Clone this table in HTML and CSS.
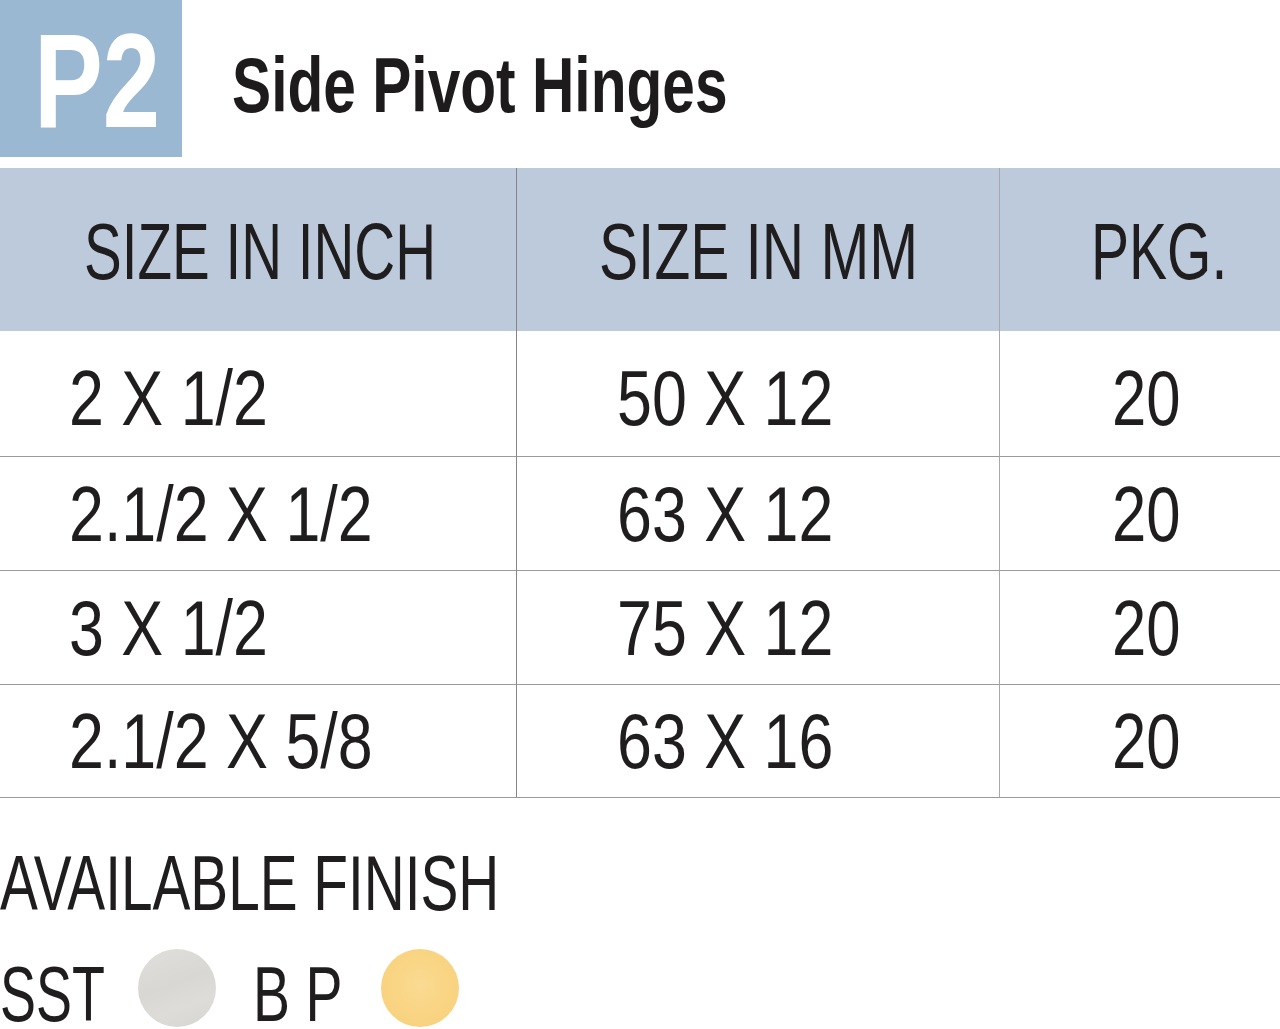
FILE: index.html
```html
<!DOCTYPE html>
<html>
<head>
<meta charset="utf-8">
<link rel="stylesheet" href="styles.css">
</head>
<body>
<div class="page">
  <header class="head">
    <div class="badge"><span class="t">P2</span></div>
    <h1 class="title"><span class="t">Side Pivot Hinges</span></h1>
  </header>
  <div class="table">
    <div class="cell th c1"><span class="t">SIZE IN INCH</span></div>
    <div class="cell th c2"><span class="t">SIZE IN MM</span></div>
    <div class="cell th c3"><span class="t">PKG.</span></div>

    <div class="cell td c1 first"><span class="t">2 X 1/2</span></div>
    <div class="cell td c2 first"><span class="t">50 X 12</span></div>
    <div class="cell td c3 first"><span class="t">20</span></div>

    <div class="cell td c1"><span class="t">2.1/2 X 1/2</span></div>
    <div class="cell td c2"><span class="t">63 X 12</span></div>
    <div class="cell td c3"><span class="t">20</span></div>

    <div class="cell td c1"><span class="t">3 X 1/2</span></div>
    <div class="cell td c2"><span class="t">75 X 12</span></div>
    <div class="cell td c3"><span class="t">20</span></div>

    <div class="cell td c1"><span class="t">2.1/2 X 5/8</span></div>
    <div class="cell td c2"><span class="t">63 X 16</span></div>
    <div class="cell td c3"><span class="t">20</span></div>
  </div>
  <div class="finish">
    <div class="finish-title"><span class="t">AVAILABLE FINISH</span></div>
    <div class="finish-row">
      <span class="finish-label sst"><span class="t">SST</span></span>
      <span class="swatch silver"></span>
      <span class="finish-label bp"><span class="t">B P</span></span>
      <span class="swatch gold"></span>
    </div>
  </div>
</div>
</body>
</html>
```

FILE: styles.css
```css
html, body {
  margin: 0;
  padding: 0;
  background: #fff;
}
body {
  font-family: "Liberation Sans", Arial, sans-serif;
  color: #1f1d1d;
}
.page {
  width: 1280px;
  height: 1029px;
  overflow: hidden;
}
.t {
  display: inline-block;
  white-space: nowrap;
  transform-origin: left center;
  transform: scaleX(var(--sx, 0.75));
}
.head {
  display: flex;
  align-items: flex-start;
  height: 157px;
  margin-bottom: 11px;
}
.badge {
  width: 182px;
  height: 157px;
  background: #9ab8d1;
  color: #fff;
  font-weight: bold;
  font-size: 133px;
  line-height: 157px;
  box-sizing: border-box;
  padding: 3px 0 0 34px;
  --sx: 0.775;
  overflow: hidden;
}
.title {
  margin: 47px 0 0 50px;
  font-size: 77px;
  font-weight: bold;
  line-height: 1;
  color: #1d1b1b;
  --sx: 0.762;
}
.table {
  display: grid;
  grid-template-columns: 517px 483px 280px;
  grid-template-rows: 163px 126px 114px 114px 113px;
}
.cell {
  display: flex;
  align-items: center;
  box-sizing: border-box;
  line-height: 1;
  white-space: nowrap;
  min-width: 0;
}
.th {
  background: #bccadb;
  font-size: 79px;
  padding-top: 4px;
}
.td {
  font-size: 78px;
  border-bottom: 1px solid #9a9a9a;
  --sx: 0.805;
}
.c1 {
  border-right: 1px solid #858585;
}
.c2 {
  border-right: 1px solid #a8a8a8;
}
.th.c1 { padding-left: 84px; --sx: 0.716; }
.th.c2 { padding-left: 82px; --sx: 0.742; }
.th.c3 { padding-left: 91px; --sx: 0.722; }
.td.c1 { padding-left: 69px; }
.td.c2 { padding-left: 100px; }
.td.c3 { padding-left: 112px; --sx: 0.79; }
.td.first { padding-top: 8px; }
.finish {
  padding-top: 47px;
}
.finish-title {
  font-size: 77px;
  line-height: 1;
  --sx: 0.737;
}
.finish-row {
  display: flex;
  align-items: center;
  margin-top: 27px;
  height: 78px;
}
.finish-label {
  font-size: 77px;
  line-height: 66px;
  height: 66px;
  padding-top: 6px;
  box-sizing: border-box;
  overflow: visible;
}
.sst { width: 138px; --sx: 0.70; }
.bp { width: 128px; margin-left: 37px; --sx: 0.72; }
.swatch {
  width: 78px;
  height: 78px;
  border-radius: 50%;
  flex: none;
}
.silver {
  background: linear-gradient(160deg, #e1dfdb 0%, #d9d7d3 45%, #dedcd8 70%, #d7d5d1 100%);
}
.gold {
  background: radial-gradient(circle at 50% 46%, #fadb93 0%, #f9d585 45%, #f7cf78 100%);
}
```
